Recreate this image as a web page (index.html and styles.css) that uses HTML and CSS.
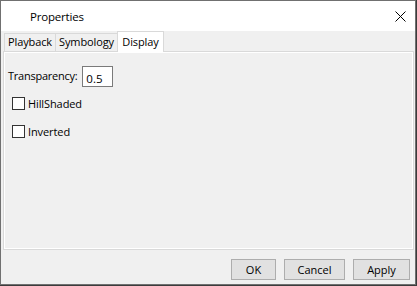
FILE: index.html
```html
<!DOCTYPE html>
<html lang="en">
<head>
    <meta charset="utf-8">
    <title>Properties</title>
    <link rel="stylesheet" href="styles.css">
</head>
<body>
  <div class="dialog">
    <div class="titlebar">
      <span class="title">Properties</span>
      <span class="close">
        <svg width="11" height="11" viewBox="0 0 11 11">
          <path d="M0.5 0.5 L10.5 10.5 M10.5 0.5 L0.5 10.5" stroke="#000" stroke-width="1" fill="none"/>
        </svg>
      </span>
    </div>
    <div class="content">
      <div class="tabs">
        <div class="tab tab-playback">Playback</div>
        <div class="tab tab-symbology">Symbology</div>
        <div class="tab tab-display active">Display</div>
      </div>
      <div class="panel">
        <div class="row">
          <label class="label">Transparency:</label>
          <input class="textbox" type="text" value="0.5">
        </div>
        <div class="check">
          <span class="box"></span>
          <span>HillShaded</span>
        </div>
        <div class="check">
          <span class="box"></span>
          <span>Inverted</span>
        </div>
      </div>
      <div class="buttons">
        <button class="btn btn-ok">OK</button>
        <button class="btn btn-cancel">Cancel</button>
        <button class="btn btn-apply">Apply</button>
      </div>
    </div>
  </div>
</body>
</html>
```
FILE: styles.css
```css
html, body {
  margin: 0;
  padding: 0;
  background: #3c3c3c;
  font-family: "Open Sans", "Noto Sans", sans-serif;
  font-size: 11px;
  color: #000;
}

* {
  box-sizing: border-box;
}

.dialog {
  width: 416px;
  height: 285px;
  border: 1px solid #707070;
  background: #f0f0f0;
  display: flex;
  flex-direction: column;
}

.titlebar {
  flex: 0 0 30px;
  background: #fff;
  display: flex;
  align-items: center;
  justify-content: space-between;
}

.title {
  padding-left: 29px;
  padding-top: 1px;
  font-size: 11.5px;
  letter-spacing: -0.2px;
}

.close {
  width: 11px;
  height: 11px;
  margin-right: 9px;
  display: flex;
}

.content {
  flex: 1;
  display: flex;
  flex-direction: column;
  padding: 0 1px 0 2px;
}

/* tab strip */
.tabs {
  display: flex;
  flex: 0 0 20px;
  padding-left: 1px;
  align-items: flex-end;
}

.tab {
  height: 18px;
  line-height: 16px;
  text-align: center;
  border: 1px solid #d9d9d9;
  border-bottom: none;
  margin-right: -1px;
  letter-spacing: -0.1px;
}

.tab-playback {
  width: 52px;
}

.tab-symbology {
  width: 63px;
}

.tab-display {
  width: 47px;
}

.tab.active {
  height: 21px;
  margin-bottom: -1px;
  background: #fff;
  position: relative;
  z-index: 1;
  line-height: 19px;
}

.panel {
  flex: 0 0 199px;
  border: 1px solid #d9d9d9;
  box-shadow: inset 0 0 0 1px #fff;
  background: #f0f0f0;
  padding: 14px 0 0 4px;
}

.row {
  display: flex;
  align-items: center;
  gap: 5px;
  height: 21px;
}

.label {
  margin-bottom: 3px;
  letter-spacing: -0.25px;
}

.textbox {
  width: 31px;
  height: 21px;
  border: 1px solid #7a7a7a;
  padding: 3px 0 0 3px;
  margin: 0;
  font: inherit;
  font-size: 11.5px;
  background: #fff;
  color: #000;
}

.check {
  display: flex;
  align-items: center;
  gap: 3px;
  margin-top: 6px;
  margin-left: 4px;
  height: 20px;
  letter-spacing: -0.1px;
}

.check + .check {
  margin-top: 8px;
}

.box {
  width: 13px;
  height: 13px;
  border: 1px solid #333;
  background: #fff;
}

.buttons {
  display: flex;
  justify-content: flex-end;
  gap: 8px;
  padding: 9px 4px 0 0;
}

.btn {
  height: 21px;
  background: #e1e1e1;
  border: 1px solid #adadad;
  font: inherit;
  padding: 0;
  color: #000;
}

.btn-ok {
  width: 45px;
}

.btn-cancel {
  width: 61px;
}

.btn-apply {
  width: 57px;
}
```
